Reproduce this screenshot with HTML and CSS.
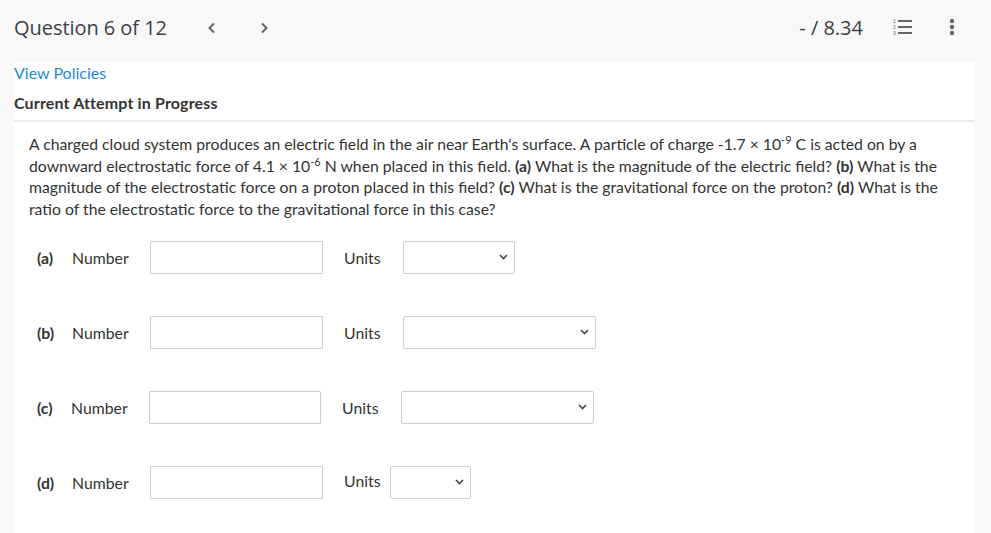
FILE: index.html
```html
<!DOCTYPE html>
<html lang="en">
<head>
<meta charset="utf-8">
<title>Question 6 of 12</title>
<link rel="stylesheet" href="styles.css">
</head>
<body>
<header class="topbar">
  <h1 class="title">Question 6 of 12</h1>
  <nav class="pager">
    <button class="nav-btn" aria-label="Previous"><svg width="10" height="12" viewBox="0 0 10 12"><path d="M7 1.5 L2.5 6 L7 10.5" fill="none" stroke="#666" stroke-width="2"/></svg></button>
    <button class="nav-btn" aria-label="Next"><svg width="10" height="12" viewBox="0 0 10 12"><path d="M3 1.5 L7.5 6 L3 10.5" fill="none" stroke="#666" stroke-width="2"/></svg></button>
  </nav>
  <div class="spacer"></div>
  <div class="score">- / 8.34</div>
  <button class="icon-btn list-btn" aria-label="Question list">
    <svg width="20" height="16" viewBox="0 0 20 16">
      <text x="0" y="4" font-size="5" font-family="Liberation Sans, sans-serif" fill="#666">1</text>
      <text x="0" y="10" font-size="5" font-family="Liberation Sans, sans-serif" fill="#666">2</text>
      <text x="0" y="16" font-size="5" font-family="Liberation Sans, sans-serif" fill="#666">3</text>
      <rect x="5" y="1" width="14" height="2" fill="#666"/>
      <rect x="5" y="7" width="14" height="2" fill="#666"/>
      <rect x="5" y="13" width="14" height="2" fill="#666"/>
    </svg>
  </button>
  <button class="icon-btn kebab-btn" aria-label="More">
    <svg width="6" height="18" viewBox="0 0 6 18"><circle cx="3" cy="3" r="2.2" fill="#666"/><circle cx="3" cy="9" r="2.2" fill="#666"/><circle cx="3" cy="15" r="2.2" fill="#666"/></svg>
  </button>
</header>

<main class="panel">
  <div class="panel-head">
    <a class="policies" href="#">View Policies</a>
    <div class="attempt">Current Attempt in Progress</div>
  </div>
  <section class="question">
    <p class="prompt">A charged cloud system produces an electric field in the air near Earth's surface. A particle of charge -1.7 × 10<sup>-9</sup> C is acted on by a downward electrostatic force of 4.1 × 10<sup>-6</sup> N when placed in this field. <b>(a)</b> What is the magnitude of the electric field? <b>(b)</b> What is the magnitude of the electrostatic force on a proton placed in this field? <b>(c)</b> What is the gravitational force on the proton? <b>(d)</b> What is the ratio of the electrostatic force to the gravitational force in this case?</p>

    <div class="answers">
      <div class="row">
        <span class="part">(a)</span>
        <span class="lbl">Number</span>
        <input class="num" type="text">
        <span class="units">Units</span>
        <div class="select sel-a"><svg width="9" height="6" viewBox="0 0 9 6"><path d="M1 1 L4.5 4.5 L8 1" fill="none" stroke="#444" stroke-width="1.6"/></svg></div>
      </div>
      <div class="row">
        <span class="part">(b)</span>
        <span class="lbl">Number</span>
        <input class="num" type="text">
        <span class="units">Units</span>
        <div class="select sel-b"><svg width="9" height="6" viewBox="0 0 9 6"><path d="M1 1 L4.5 4.5 L8 1" fill="none" stroke="#444" stroke-width="1.6"/></svg></div>
      </div>
      <div class="row row-c">
        <span class="part">(c)</span>
        <span class="lbl">Number</span>
        <input class="num" type="text">
        <span class="units">Units</span>
        <div class="select sel-b"><svg width="9" height="6" viewBox="0 0 9 6"><path d="M1 1 L4.5 4.5 L8 1" fill="none" stroke="#444" stroke-width="1.6"/></svg></div>
      </div>
      <div class="row row-d">
        <span class="part">(d)</span>
        <span class="lbl">Number</span>
        <input class="num" type="text">
        <span class="units">Units</span>
        <div class="select sel-d"><svg width="9" height="6" viewBox="0 0 9 6"><path d="M1 1 L4.5 4.5 L8 1" fill="none" stroke="#444" stroke-width="1.6"/></svg></div>
      </div>
    </div>
  </section>
</main>
</body>
</html>
```

FILE: styles.css
```css
* { box-sizing: border-box; }

html, body {
  margin: 0;
  padding: 0;
  background: #f8f8f8;
  height: 100%;
  overflow: hidden;
}

body {
  font-family: Lato, "Open Sans", sans-serif;
  color: #333;
}

.topbar {
  height: 62px;
  display: flex;
  align-items: center;
  padding: 0 14px 8px 14px;
}

.title {
  margin: 0;
  font-family: "Open Sans", sans-serif;
  font-weight: 400;
  font-size: 20px;
  color: #3b3f45;
  letter-spacing: -0.05px;
}

.pager {
  display: flex;
  gap: 40px;
  margin-left: 39px;
  padding-top: 2px;
}

.nav-btn, .icon-btn {
  border: 0;
  background: none;
  padding: 0;
  display: flex;
  align-items: center;
  justify-content: center;
  cursor: pointer;
}

.nav-btn { width: 12px; height: 14px; }

.spacer { flex: 1; }

.score {
  font-family: "Open Sans", sans-serif;
  font-size: 20px;
  color: #3b3f45;
}

.list-btn { margin-left: 30px; width: 20px; height: 18px; }
.kebab-btn { margin-left: 35px; width: 8px; height: 20px; margin-right: 21px; }

.panel {
  background: #fff;
  margin: 0 17px 0 14px;
  min-height: 480px;
}

.panel-head {
  border-bottom: 2px solid #ececec;
  padding-bottom: 7px;
}

.policies {
  display: block;
  font-size: 16px;
  line-height: 21px;
  color: #1d8ad6;
  text-decoration: none;
}

.attempt {
  margin-top: 9px;
  font-size: 16px;
  line-height: 21px;
  font-weight: 700;
  letter-spacing: 0.15px;
  color: #333;
}

.question {
  padding: 11px 15px 0 15px;
}

.prompt {
  margin: 0;
  font-size: 15.75px;
  line-height: 21.7px;
  color: #333;
  padding-right: 20px;
}

.prompt sup {
  font-size: 11px;
  line-height: 0;
  vertical-align: 6px;
}

.answers {
  padding-top: 21px;
  padding-left: 8px;
  display: flex;
  flex-direction: column;
  gap: 42px;
}

.row {
  display: flex;
  align-items: center;
  height: 33px;
  font-size: 15.8px;
}

.part { width: 35px; font-weight: 700; }
.lbl { width: 78px; }

.num {
  width: 173px;
  height: 33px;
  border: 1px solid #ccc;
  border-radius: 1px;
  margin: 0;
  font: inherit;
}

.units {
  margin-left: 21px;
  width: 59px;
}

.select {
  height: 33px;
  border: 1px solid #ccc;
  border-radius: 2px;
  display: flex;
  align-items: center;
  justify-content: flex-end;
  padding-right: 6px;
}

.sel-a { width: 112px; }
.sel-b { width: 193px; }

.row-c .part { width: 34px; }
.row-c .num { width: 172px; }

.row-d .units { width: 46px; position: relative; top: -2px; }
.sel-d { width: 81px; }
```
